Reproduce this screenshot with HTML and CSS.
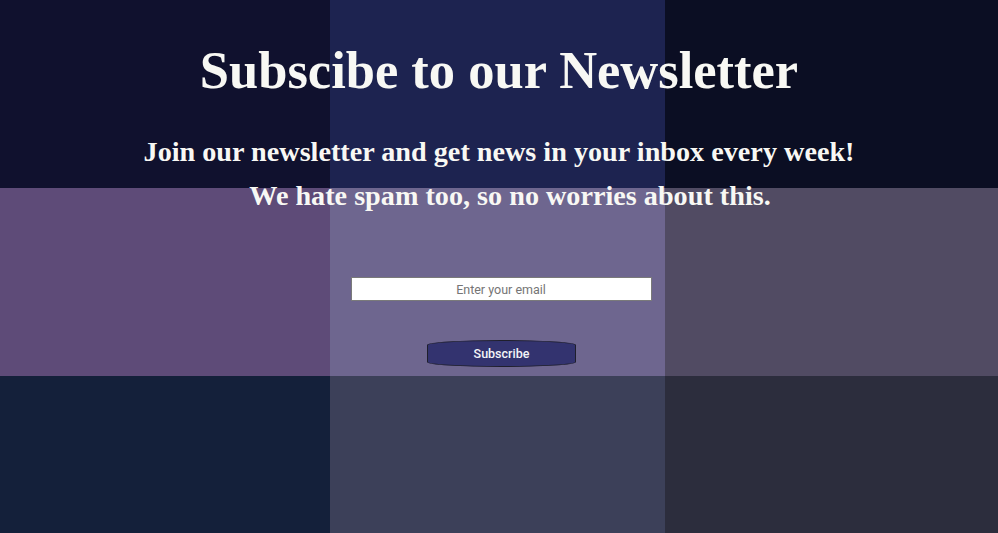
FILE: index.html
```html
<!DOCTYPE html>
<html lang="en">
<head>
<meta charset="utf-8">
<title>Newsletter</title>
<link rel="stylesheet" href="styles.css">
</head>
<body>
<main class="page">
  <div class="tile r1 c1 t1"></div>
  <div class="tile r1 c2 t2"></div>
  <div class="tile r1 c3 t3"></div>
  <div class="tile r2 c1 t4"></div>
  <div class="tile r2 c2 t5"></div>
  <div class="tile r2 c3 t6"></div>
  <div class="tile r3 c1 t7"></div>
  <div class="tile r3 c2 t8"></div>
  <div class="tile r3 c3 t9"></div>
  <section class="content">
    <h1 class="title">Subscibe to our Newsletter</h1>
    <p class="lead">Join our newsletter and get news in your inbox every week!</p>
    <p class="lead lead-indent">We hate spam too, so no worries about this.</p>
    <form class="form">
      <input class="email" type="email" placeholder="Enter your email">
      <button class="btn" type="button">Subscribe</button>
    </form>
  </section>
</main>
</body>
</html>
```
FILE: styles.css
```css
html, body {
  margin: 0;
  padding: 0;
  height: 100%;
  overflow: hidden;
}
.page {
  display: grid;
  grid-template-columns: 330px 335px 1fr;
  grid-template-rows: 188px 188px 1fr;
  width: 100%;
  height: 100vh;
}
.r1 { grid-row: 1; }
.r2 { grid-row: 2; }
.r3 { grid-row: 3; }
.c1 { grid-column: 1; }
.c2 { grid-column: 2; }
.c3 { grid-column: 3; }
.t1 { background: #10112e; }
.t2 { background: #1d2350; }
.t3 { background: #0b0e23; }
.t4 { background: #5e4b78; }
.t5 { background: #6e668f; }
.t6 { background: #514b63; }
.t7 { background: #14203a; }
.t8 { background: #3c4059; }
.t9 { background: #2c2d3d; }
.content {
  grid-column: 1 / -1;
  grid-row: 1 / -1;
  display: flex;
  flex-direction: column;
  align-items: center;
  padding-top: 40px;
  color: #f8f8f4;
  font-family: "Liberation Serif", "Times New Roman", serif;
  font-weight: bold;
  text-align: center;
}
.title {
  margin: 0 0 30px;
  font-size: 52.5px;
  line-height: 60px;
}
.lead {
  margin: 0;
  font-size: 28.2px;
  line-height: 44px;
}
.lead-indent {
  padding-left: 22px;
}
.form {
  display: flex;
  flex-direction: column;
  align-items: center;
  margin-top: 59px;
  padding-left: 3px;
  gap: 39px;
}
.email {
  box-sizing: border-box;
  width: 301px;
  height: 24px;
  margin: 0 0 0 1px;
  padding: 0 4px;
  border: 1px solid #7a7a7a;
  background: #fff;
  font-family: Roboto, "Liberation Sans", sans-serif;
  font-size: 12.5px;
  text-align: center;
  color: #222;
}
.email::placeholder {
  color: #757575;
}
.btn {
  box-sizing: border-box;
  width: 149px;
  height: 27px;
  margin: 0 0 0 2px;
  border: 1px solid #1f1f2c;
  border-radius: 50% / 5px;
  background: #33336f;
  color: #f4f4f8;
  font-family: Roboto, "Liberation Sans", sans-serif;
  font-size: 12.5px;
  font-weight: 500;
}
```
